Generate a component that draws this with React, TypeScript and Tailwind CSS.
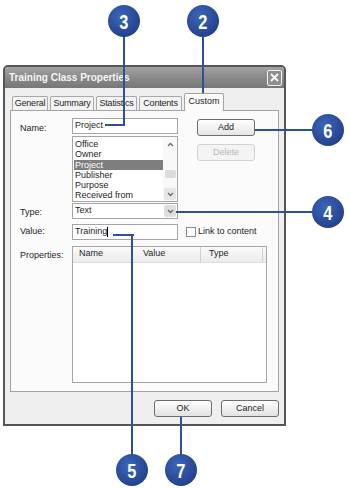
import React from 'react';

// chevron used by the list scrollbar and the combo box
const Chevron = ({ up = false }: { up?: boolean }) => (
  <svg width="7" height="5" viewBox="0 0 7 5">
    <polyline
      points={up ? '1,4 3.5,1.5 6,4' : '1,1 3.5,3.5 6,1'}
      fill="none"
      stroke="#6b6b6b"
      strokeWidth="1.4"
    />
  </svg>
);

const Callout = ({ n, className }: { n: string; className: string }) => (
  <div
    className={`absolute w-[32px] h-[32px] rounded-full bg-[radial-gradient(circle_at_40%_35%,#3d66b8,#22418c_75%,#1a3370)] flex items-center justify-center text-white ${className}`}
  >
    <span className="inline-block scale-x-[0.78] text-[21px] leading-none font-bold font-['Liberation_Sans',sans-serif]">
      {n}
    </span>
  </div>
);

const tabs = [
  { label: 'General', w: 'w-[36px]' },
  { label: 'Summary', w: 'w-[44px]' },
  { label: 'Statistics', w: 'w-[41px]' },
  { label: 'Contents', w: 'w-[43px]' },
];

const items = ['Office', 'Owner', 'Project', 'Publisher', 'Purpose', 'Received from'];

export default function App() {
  return (
    <div className="relative w-[350px] h-[489px] overflow-hidden bg-white font-['Liberation_Sans',Arial,sans-serif] text-[9px] text-[#1e1e1e]">
      {/* Dialog */}
      <div className="ml-[3px] mt-[65px] w-[283px] h-[361px] border-2 border-[#565656] rounded-t-[5px] bg-[#efefef] flex flex-col">
        {/* Title bar */}
        <div className="h-[21px] shrink-0 flex items-center justify-between pl-[4px] pr-[2px] bg-gradient-to-b from-[#a2a2a2] via-[#8a8a8a] to-[#777] rounded-t-[3px]">
          <span className="text-[10px] font-bold text-[#f6f6f6]">Training Class Properties</span>
          <div className="w-[15px] h-[16px] border border-[#f2f2f2] rounded-[2px] bg-[#8f8f8f] flex items-center justify-center">
            <svg width="9" height="9" viewBox="0 0 9 9">
              <path d="M1 1 L8 8 M8 1 L1 8" stroke="#fafafa" strokeWidth="1.8" />
            </svg>
          </div>
        </div>

        {/* Tabs */}
        <div className="h-[22px] shrink-0 flex items-end pl-[7px] gap-[2px]">
          {tabs.map((t) => (
            <div
              key={t.label}
              className={`${t.w} h-[14px] border border-b-0 border-[#a9a9a9] rounded-t-[2px] bg-[#f3f3f3] flex items-center justify-center tracking-[-0.2px]`}
            >
              {t.label}
            </div>
          ))}
          <div className="relative z-10 -mb-px w-[40px] h-[18px] border border-b-0 border-[#a3a3a3] rounded-t-[2px] bg-[#fbfbfb] flex items-center justify-center pb-[2px]">
            Custom
          </div>
        </div>

        {/* Tab panel */}
        <div className="mx-[5px] h-[282px] shrink-0 border border-[#a3a3a3] bg-[#fbfbfb] pt-[7px] pl-[9px]">
          {/* Name + list + buttons */}
          <div className="flex">
            <div className="w-[52px] pt-[4px]">Name:</div>
            <div className="w-[106px] flex flex-col gap-[2px]">
              <div className="h-[16px] border border-[#a6a6a6] bg-white pl-[2px] flex items-center">Project</div>
              <div className="h-[66px] border border-[#a6a6a6] bg-white flex">
                <div className="flex-1 py-[2px] pl-[1px] leading-[10.3px]">
                  {items.map((it) => (
                    <div
                      key={it}
                      className={it === 'Project' ? 'bg-[#7e7e7e] text-white pl-[1px]' : 'pl-[1px]'}
                    >
                      {it}
                    </div>
                  ))}
                </div>
                <div className="w-[14px] flex flex-col justify-between items-center py-[1px] bg-[#f8f8f8]">
                  <div className="w-[12px] h-[12px] flex items-center justify-center">
                    <Chevron up />
                  </div>
                  <div className="w-[11px] h-[8px] rounded-[2px] bg-[#dcdcdc] mt-[20px]" />
                  <div className="flex-1" />
                  <div className="w-[12px] h-[12px] rounded-[2px] bg-[#e6e6e6] flex items-center justify-center">
                    <Chevron />
                  </div>
                </div>
              </div>
            </div>
            <div className="ml-[19px] pt-[1px] flex flex-col gap-[8px]">
              <div className="w-[58px] h-[17px] border border-[#6d6d6d] rounded-[3px] bg-gradient-to-b from-white to-[#e4e4e4] flex items-center justify-center">
                Add
              </div>
              <div className="w-[58px] h-[17px] border border-[#d2d2d2] rounded-[3px] bg-[#f4f4f4] text-[#b8b8b8] flex items-center justify-center">
                Delete
              </div>
            </div>
          </div>

          {/* Type */}
          <div className="flex mt-[1px]">
            <div className="w-[52px] pt-[3px]">Type:</div>
            <div className="w-[106px] h-[16px] border border-[#a6a6a6] bg-white pl-[2px] flex items-center justify-between pr-[1px]">
              <span>Text</span>
              <div className="w-[12px] h-[12px] rounded-[2px] bg-[#dedede] flex items-center justify-center">
                <Chevron />
              </div>
            </div>
          </div>

          {/* Value */}
          <div className="flex mt-[4px] items-center">
            <div className="w-[52px]">Value:</div>
            <div className="w-[106px] h-[16px] border border-[#a6a6a6] bg-white pl-[2px] flex items-center">
              Training<span className="w-px h-[10px] bg-black" />
            </div>
            <div className="ml-[8px] w-[10px] h-[10px] border border-[#8a8a8a] bg-white" />
            <span className="ml-[2px]">Link to content</span>
          </div>

          {/* Properties */}
          <div className="flex mt-[6px]">
            <div className="w-[52px] pt-[3px]">Properties:</div>
            <div className="w-[195px] h-[137px] border border-[#a6a6a6] bg-white flex flex-col">
              <div className="h-[16px] flex bg-gradient-to-b from-[#fafafa] to-[#ebebeb] border-b border-[#dcdcdc]">
                <div className="w-[59px] pl-[6px] flex items-center border-r border-[#d0d0d0]">Name</div>
                <div className="w-[69px] pl-[11px] flex items-center border-r border-[#d0d0d0]">Value</div>
                <div className="w-[62px] pl-[8px] flex items-center border-r border-[#d0d0d0]">Type</div>
              </div>
            </div>
          </div>
        </div>

        {/* OK / Cancel */}
        <div className="flex justify-end gap-[9px] pr-[5px] mt-[8px]">
          <div className="w-[58px] h-[17px] border border-[#6d6d6d] rounded-[3px] bg-gradient-to-b from-white to-[#e2e2e2] flex items-center justify-center">
            OK
          </div>
          <div className="w-[58px] h-[17px] border border-[#6d6d6d] rounded-[3px] bg-gradient-to-b from-white to-[#e2e2e2] flex items-center justify-center">
            Cancel
          </div>
        </div>
      </div>

      {/* Callout leader lines */}
      <div className="absolute left-[123px] top-[36px] w-[2px] h-[90px] bg-[#2c4f9e]" />
      <div className="absolute left-[105px] top-[124px] w-[20px] h-[2px] bg-[#2c4f9e]" />
      <div className="absolute left-[202px] top-[36px] w-[2px] h-[65px] bg-[#2c4f9e]" />
      <div className="absolute left-[255px] top-[129px] w-[58px] h-[2px] bg-[#2c4f9e]" />
      <div className="absolute left-[176px] top-[211px] w-[137px] h-[2px] bg-[#2c4f9e]" />
      <div className="absolute left-[113px] top-[234px] w-[21px] h-[2px] bg-[#2c4f9e]" />
      <div className="absolute left-[131px] top-[234px] w-[2px] h-[221px] bg-[#2c4f9e]" />
      <div className="absolute left-[180px] top-[417px] w-[2px] h-[38px] bg-[#2c4f9e]" />

      {/* Callout bubbles */}
      <Callout n="3" className="left-[108px] top-[5px]" />
      <Callout n="2" className="left-[187px] top-[5px]" />
      <Callout n="6" className="left-[312px] top-[114px]" />
      <Callout n="4" className="left-[312px] top-[196px]" />
      <Callout n="5" className="left-[116px] top-[454px]" />
      <Callout n="7" className="left-[165px] top-[454px]" />
    </div>
  );
}
